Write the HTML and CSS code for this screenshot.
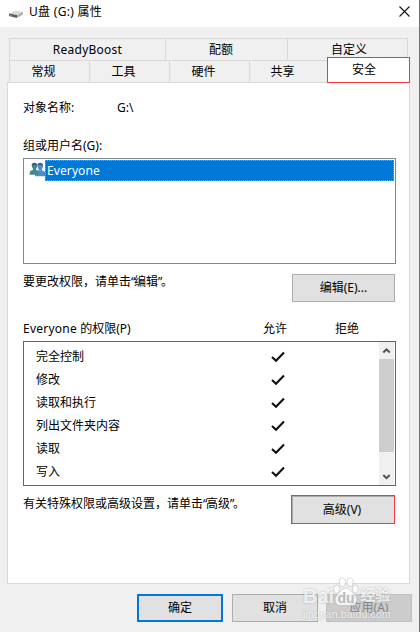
FILE: index.html
```html
<!DOCTYPE html>
<html lang="zh-CN">
<head>
<meta charset="utf-8">
<title>U盘 (G:) 属性</title>
<link rel="stylesheet" href="styles.css">
</head>
<body>
<div class="dialog">
  <header class="titlebar">
    <svg class="drive" width="16" height="10" viewBox="0 0 16 10">
      <path d="M1 4.4 7 1.4 15 2.8 9 6Z" fill="#dadada"/>
      <path d="M1 4.4 9 6V9L1 7Z" fill="#5c5c5c"/>
      <path d="M9 6 15 2.8V5.4L9 9Z" fill="#b0b0b0"/>
      <path d="M1.6 6.2 3.4 6.7" stroke="#6dbb86" stroke-width="1"/>
    </svg>
    <h1 class="title">U盘 (G:) 属性</h1>
    <svg class="close" width="11" height="11" viewBox="0 0 11 11"><path d="M.5.5 10.5 10.5M10.5.5.5 10.5" stroke="#111" stroke-width="1.1" fill="none"/></svg>
  </header>

  <nav class="tabs">
    <div class="tab-row back">
      <span class="tab"><span class="latin">ReadyBoost</span></span><span class="tab">配额</span><span class="tab">自定义</span>
    </div>
    <div class="tab-row front">
      <span class="tab">常规</span><span class="tab">工具</span><span class="tab">硬件</span><span class="tab">共享</span><span class="tab active">安全</span>
    </div>
  </nav>

  <main class="panel">
    <div class="object"><span class="object-label">对象名称:</span><span>G:\</span></div>
    <div class="groups-label">组或用户名(G):</div>
    <div class="groups">
      <div class="group">
        <svg class="users" width="17" height="15" viewBox="0 0 17 15">
          <path d="M6 14.2V10.8C6 9.2 8 8.6 9.6 8.4V7C8 5.5 7.8 1 11.2 1S14.5 5.4 13 7V8.4C14.8 8.7 16.5 9.5 16.6 11.5V14.2Z" fill="#4f8fcd"/>
          <path d="M8.5 4C8.2 1.8 9.3.7 11.2.7S14.3 2 14 5L13 3.2 10.5 2.8Z" fill="#35658f"/>
          <path d="M.7 12.7V10.8C.7 9 2.4 8.4 4 8V6.7C2.4 5 2.3 1 5.4 1S8.5 5 7.2 6.7V8C9 8.5 10 9.4 10 12.7Z" fill="#46868f"/>
          <path d="M2.7 4C2.5 1.7 3.7.7 5.5.7S8.4 2 8 4.3L7 3 4.5 2.6Z" fill="#315f76"/>
        </svg>
        <div class="group-name"><span class="latin">Everyone</span></div>
      </div>
    </div>
    <div class="action edit">
      <span class="hint">要更改权限，请单击<span class="quote">“</span>编辑<span class="quote">”</span>。</span>
      <button class="button">编辑(E)...</button>
    </div>
    <div class="perm-head"><span class="perm-title"><span class="latin">Everyone</span> 的权限(P)</span><span class="allow">允许</span><span>拒绝</span></div>
    <div class="perms">
      <ul class="perm-list">
        <li>完全控制<svg class="check" viewBox="0 0 14 12"><path d="M1 6 5 9.8 13 1.5"/></svg></li>
        <li>修改<svg class="check" viewBox="0 0 14 12"><path d="M1 6 5 9.8 13 1.5"/></svg></li>
        <li>读取和执行<svg class="check" viewBox="0 0 14 12"><path d="M1 6 5 9.8 13 1.5"/></svg></li>
        <li>列出文件夹内容<svg class="check" viewBox="0 0 14 12"><path d="M1 6 5 9.8 13 1.5"/></svg></li>
        <li>读取<svg class="check" viewBox="0 0 14 12"><path d="M1 6 5 9.8 13 1.5"/></svg></li>
        <li>写入<svg class="check" viewBox="0 0 14 12"><path d="M1 6 5 9.8 13 1.5"/></svg></li>
      </ul>
      <div class="scrollbar">
        <svg class="arrow" viewBox="0 0 15 17"><path d="M4.3 10.5 7.5 7.3 10.7 10.5"/></svg>
        <div class="thumb"></div>
        <svg class="arrow" viewBox="0 0 15 17"><path d="M4.3 7 7.5 10.2 10.7 7"/></svg>
      </div>
    </div>
    <div class="action advanced">
      <span class="hint">有关特殊权限或高级设置，请单击<span class="quote">“</span>高级<span class="quote">”</span>。</span>
      <button class="button marked">高级(V)</button>
    </div>
  </main>

  <footer class="footer">
    <button class="button primary">确定</button>
    <button class="button">取消</button>
    <button class="button disabled">应用(A)</button>
  </footer>

  <div class="watermark">
    <div class="brand">
      <span>Bai</span>
      <svg class="paw" width="26" height="30" viewBox="0 0 26 30">
        <ellipse cx="3.7" cy="12" rx="3" ry="4"/><ellipse cx="9.5" cy="5.2" rx="3" ry="4.3"/><ellipse cx="17" cy="5.2" rx="3" ry="4.3"/><ellipse cx="22.3" cy="12" rx="3" ry="4"/>
        <path d="M13 11C17 11 18 15 21.5 17.5 25 20.5 25 28 19 28.5H7C1 28 1 20.5 4.5 17.5 8 15 9 11 13 11Z"/>
        <text x="13" y="25.5" text-anchor="middle">du</text>
      </svg>
      <span class="brand-cn">经验</span>
    </div>
    <div class="site">jingyan.baidu.com</div>
  </div>
</div>
</body>
</html>
```
FILE: styles.css
```css
* { box-sizing: border-box; }

body {
  margin: 0;
  font: 12px/16px "Noto Sans", "Noto Sans CJK SC", sans-serif;
  color: #000;
}

.dialog {
  position: relative;
  width: 420px;
  height: 632px;
  overflow: hidden;
  background: #f0f0f0;
  border-right: 1px solid #737373;
}

.latin { letter-spacing: 0.25px; }
.group-name .latin { letter-spacing: 0.1px; }
.quote { letter-spacing: -1.3px; }

.titlebar {
  display: flex;
  align-items: center;
  height: 27px;
  padding: 0 9px 3px 8px;
  background: #fff;
}
.drive { margin-top: 4px; }
.title { flex: 1; margin: 0 0 0 5px; font-size: 12px; font-weight: 400; letter-spacing: 0.3px; }
.close { margin-bottom: 2px; }

.tabs { margin: 11px 10px 0 9px; }
.tab-row { display: grid; }
.back { grid-template-columns: 156px 122px 121px; width: 399px; }
.front { grid-template-columns: 80px 80px 80px 78px 83px; width: 401px; }
.tab {
  height: 22px;
  border: solid #d9d9d9;
  border-width: 1px 0 0 1px;
  line-height: 21px;
  text-align: center;
}
.back .tab:nth-child(2) { padding-right: 11px; }
.back .tab:last-child { padding-left: 3px; border-right-width: 1px; }
.front .tab { padding-right: 12px; }
.front .active {
  position: relative;
  height: 26px;
  margin: -3px 0 -1px;
  padding-right: 9px;
  border: 1px solid #f03a3a;
  background: #fff;
  line-height: 24px;
}

.panel {
  width: 403px;
  height: 502px;
  margin-left: 7px;
  padding: 17px 13px 0 15px;
  border: 1px solid #d9d9d9;
  background: #fff;
}
.object { display: flex; }
.object-label { width: 94px; }
.groups-label { margin-top: 22px; }

.groups {
  width: 373px;
  height: 106px;
  margin-top: 4px;
  padding: 1px;
  border: 1px solid #828790;
}
.group { display: flex; }
.users { margin: 2px -1px 0 4px; }
.group-name {
  flex: 1;
  height: 21px;
  padding: 1px 1px 1px 2px;
  background:
    repeating-linear-gradient(90deg, #ff8728 0 1px, transparent 1px 2px) top / 100% 1px no-repeat,
    repeating-linear-gradient(90deg, #ff8728 0 1px, transparent 1px 2px) bottom / 100% 1px no-repeat,
    repeating-linear-gradient(#ff8728 0 1px, transparent 1px 2px) left / 1px 100% no-repeat,
    repeating-linear-gradient(#ff8728 0 1px, transparent 1px 2px) right / 1px 100% no-repeat,
    #0078d7;
  color: #fff;
  line-height: 19px;
}

.action {
  display: flex;
  justify-content: space-between;
  width: 372px;
}
.hint { padding-top: 1px; }
.edit { margin-top: 10px; }
.edit .hint { padding-top: 0; }
.button {
  width: 86px;
  height: 28px;
  padding: 0;
  border: 1px solid #adadad;
  background: #e1e1e1;
  color: #000;
  font: inherit;
}
.action .button { width: 103px; }

.perm-head { display: flex; margin-top: 19px; }
.perm-title { width: 240px; }
.allow { width: 72px; }

.perms {
  display: flex;
  width: 373px;
  height: 145px;
  margin-top: 4px;
  padding-right: 1px;
  border: 1px solid #646464;
}
.perm-list { flex: 1; margin: 0; padding: 3px 0 0 12px; list-style: none; }
.perm-list li {
  display: grid;
  grid-template-columns: 235px 14px;
  align-items: center;
  height: 23px;
}
.check { width: 14px; height: 12px; fill: none; stroke: #111; stroke-width: 2.1; }

.scrollbar { width: 15px; background: #f0f0f0; }
.arrow { display: block; width: 15px; height: 17px; fill: none; stroke: #505050; stroke-width: 2; }
.thumb { height: 93px; margin-bottom: 16px; background: #cdcdcd; }

.advanced { margin-top: 9px; }
.advanced .button { width: 104px; height: 29px; }
.advanced .marked { padding-right: 2px; border-color: #f03a3a; box-shadow: inset 1px 1px #adadad; }

.footer {
  display: flex;
  gap: 9px;
  margin: 10px 0 0 137px;
}
.primary { border: 2px solid #0078d7; }
.footer .disabled { margin-left: -1px; border-color: #bfbfbf; background: #ccc; color: #838383; }

.watermark {
  position: absolute;
  left: 303px;
  top: 577px;
  color: rgba(255, 255, 255, 0.8);
  text-shadow: 0 0 2px rgba(130, 130, 130, 0.55);
}
.brand {
  display: flex;
  align-items: flex-end;
  height: 30px;
  font: bold 20px/22px "Liberation Sans", sans-serif;
}
.paw { margin-left: -1px; fill: rgba(255, 255, 255, 0.8); stroke: rgba(150, 150, 150, 0.5); stroke-width: 0.7; }
.paw text { font: bold 14px "Liberation Sans", sans-serif; fill: #bbb; stroke: none; text-shadow: none; }
.brand-cn { margin-left: 1px; font: bold 15px/26px "Noto Sans CJK SC", sans-serif; }
.site { font: 10.5px/14px "Liberation Sans", sans-serif; letter-spacing: 0.2px; }
```
